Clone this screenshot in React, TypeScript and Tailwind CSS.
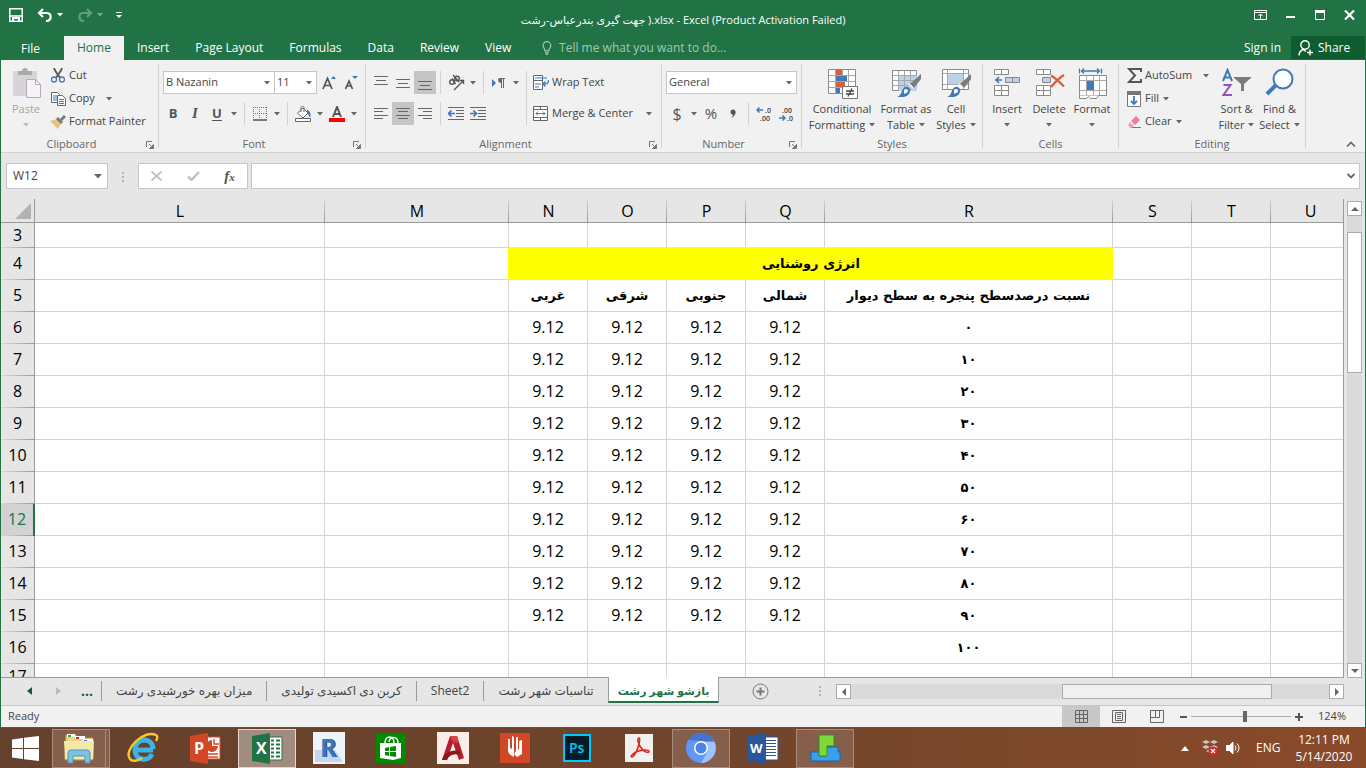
import { useState, type ReactNode } from 'react'

const columns = [
  { id: 'L', width: 'w-[290px]' },
  { id: 'M', width: 'w-[184px]' },
  { id: 'N', width: 'w-[79px]' },
  { id: 'O', width: 'w-[79px]' },
  { id: 'P', width: 'w-[79px]' },
  { id: 'Q', width: 'w-[79px]' },
  { id: 'R', width: 'w-[288px]' },
  { id: 'S', width: 'w-[79px]' },
  { id: 'T', width: 'w-[79px]' },
  { id: 'U', width: 'w-[79px]' },
]

const headings: Record<string, string> = {
  N: 'غربی',
  O: 'شرقی',
  P: 'جنوبی',
  Q: 'شمالی',
  R: 'نسبت درصدسطح پنجره به سطح دیوار',
}

const ratios = ['۰', '۱۰', '۲۰', '۳۰', '۴۰', '۵۰', '۶۰', '۷۰', '۸۰', '۹۰', '۱۰۰']
const rows = [3, 4, 5, 6, 7, 8, 9, 10, 11, 12, 13, 14, 15, 16, 17]

const sheets = ['میزان بهره خورشیدی رشت', 'کربن دی اکسیدی تولیدی', 'Sheet2', 'تناسبات شهر رشت', 'بازشو شهر رشت']
const tabs = ['Home', 'Insert', 'Page Layout', 'Formulas', 'Data', 'Review', 'View']

function Caret({ className = 'text-[#666]' }: { className?: string }) {
  return <svg width="6" height="4" viewBox="0 0 6 4" className={`shrink-0 ${className}`}><path d="M0 0h6L3 3.5z" fill="currentColor" /></svg>
}

function Sep() {
  return <span className="mx-1 w-px self-stretch bg-[#d2d2d2]" />
}

function Group({ name, width, launcher, children }: { name: string; width: string; launcher?: boolean; children: ReactNode }) {
  return (
    <section aria-label={name} className={`my-1 flex shrink-0 flex-col border-r border-[#d2d2d2] ${width}`}>
      <div className="flex min-h-0 flex-1 items-start">{children}</div>
      <div className={`relative h-3 text-center leading-4 text-[#666] ${launcher ? 'pr-4' : ''}`}>
        {name}
        {launcher && (
          <button aria-label={`${name} settings`} className="absolute right-1 top-[5px]">
            <svg width="8" height="8" viewBox="0 0 8 8" fill="none" stroke="#777"><path d="M.5 6V.5H6M3 3l3 3" /><path d="M7.5 3.5v4h-4z" fill="#777" /></svg>
          </button>
        )}
      </div>
    </section>
  )
}

function IconButton({ label, className = 'w-[22px]', active, children }: { label: string; className?: string; active?: boolean; children: ReactNode }) {
  return (
    <button aria-label={label} className={`flex h-[23px] shrink-0 items-center justify-center text-[#555] ${active ? 'bg-[#c5c5c5]' : 'hover:bg-[#ddd]'} ${className}`}>{children}</button>
  )
}

function BigButton({ icon, lines, width, caretBelow, disabled }: { icon: ReactNode; lines: string[]; width: string; caretBelow?: boolean; disabled?: boolean }) {
  return (
    <button disabled={disabled} className={`flex shrink-0 flex-col items-center pt-1 leading-4 ${disabled ? 'text-[#a6a6a6]' : 'text-[#444]'} ${width}`}>
      <span className="mb-[3px] flex h-[30px] items-center">{icon}</span>
      {lines.map((line, i) => (
        <span key={line} className="flex items-center gap-1 whitespace-nowrap">
          {line}
          {!caretBelow && i === lines.length - 1 && <Caret />}
        </span>
      ))}
      {caretBelow && <span className="flex h-4 items-center"><Caret className={disabled ? 'text-[#bbb]' : 'text-[#666]'} /></span>}
    </button>
  )
}

function SmallButton({ icon, label, caret }: { icon: ReactNode; label: string; caret?: string }) {
  return (
    <button className="flex h-[23px] items-center gap-[3px] whitespace-nowrap text-[#444]">
      <span className="flex w-4 justify-center">{icon}</span>
      {label}
      {caret && <span className={caret}><Caret /></span>}
    </button>
  )
}

function Picker({ label, options, width }: { label: string; options: string[]; width: string }) {
  return (
    <label className={`relative flex h-[23px] items-center border border-[#c6c6c6] bg-white ${width}`}>
      <select aria-label={label} className="h-full w-full appearance-none bg-transparent pl-[2px] text-[#444] outline-none">
        {options.map(o => <option key={o}>{o}</option>)}
      </select>
      <span className="pointer-events-none absolute right-1"><Caret /></span>
    </label>
  )
}

function Lines({ d }: { d: string }) {
  return <svg width="14" height="14" viewBox="0 0 14 14" stroke="#666" fill="none"><path d={d} /></svg>
}

const Grow = ({ down }: { down?: boolean }) => (
  <svg width="15" height="16" viewBox="0 0 15 16">
    <path d={down ? 'M1.5 14 5 6 8.500 14M3 11h4' : 'M1 14 5.500 3.500 10 14M3 10.500h5'} stroke="#555" strokeWidth="1.700" fill="none" />
    <path d={down ? 'M8 1h6l-3 3z' : 'M9 4h5l-2.500-3z'} fill="#3f7ab8" />
  </svg>
)

const Indent = ({ right }: { right?: boolean }) => (
  <svg width="16" height="14" viewBox="0 0 16 14" fill="none">
    <path d="M0 .5h16M8 3.500h8M8 6.500h8M8 9.500h8M0 12.500h16" stroke="#666" />
    <path d={right ? 'M0 6.500h6M3.500 3.500l3 3-3 3' : 'M7 6.500H1M3.500 3.500l-3 3 3 3'} stroke="#3f7ab8" strokeWidth="1.700" />
  </svg>
)

const Brush = () => (
  <g>
    <path d="M30 6v5l-7 9-4-4z" fill="#7c7c7c" />
    <path d="M18 16l4 4" stroke="#fff" strokeWidth="1.500" />
    <path d="M6 29c5-1 4-8 8-10 4-1 7 3 4 7-3 4-8 3-12 3z" fill="#3f7ab8" />
    <path d="M13 22c2-2 4-1 4 1s-3 2-4 3z" fill="#fff" />
  </g>
)

const FormatTable = () => (
  <svg width="31" height="30" viewBox="0 0 31 30">
    <path d="M1.500 2.500h24v20h-24z" fill="#fff" stroke="#8a8a8a" />
    <path d="M8 8h18v15H8z" fill="#bdd1e8" />
    <path d="M2 7.500h24M2 12.500h24M2 17.500h24M7.500 3v19M13.500 3v19M19.500 3v19" stroke="#a8a8a8" fill="none" />
    <Brush />
  </svg>
)

const CellStyles = () => (
  <svg width="31" height="30" viewBox="0 0 31 30">
    <path d="M1.500 1.500h26v20h-26z" fill="#fff" stroke="#8a8a8a" />
    <path d="M7 6h15v10H7z" fill="#bdd1e8" />
    <path d="M2 5.500h25M2 16.500h25M6.500 2v19M22.500 2v19" stroke="#a8a8a8" fill="none" />
    <Brush />
  </svg>
)

const Conditional = () => (
  <svg width="31" height="31" viewBox="0 0 31 31">
    <path d="M1.500 1.500h27v24h-27z" fill="#fff" stroke="#8a8a8a" />
    <path d="M2 7.500h26M2 13.500h26M2 19.500h26M8.500 2v23M15.500 2v23M21.500 2v23" stroke="#a8a8a8" />
    <path d="M9 2h6v5H9zM9 14h9v5H9z" fill="#d65f3d" /><path d="M9 8h11v5H9zM9 20h4v5H9z" fill="#3f7ab8" />
    <path d="M15.500 18.500h15v12h-15z" fill="#fff" stroke="#777" />
    <path d="M19 23h8M19 26h8M25 20.500l-4 8" stroke="#444" strokeWidth="1.300" />
  </svg>
)

const InsertCells = ({ del }: { del?: boolean }) => (
  <svg width="31" height="30" viewBox="0 0 31 30" fill="none">
    <path d="M2.500 1.500h14v5h-14zM9.500 1.500v5M2.500 17.500h14v10h-14zM9.500 17.500v10M2.500 22.500h14" fill="#fff" stroke="#8a8a8a" />
    {del ? (
      <g>
        <path d="M8.500 9.500h8v5h-8z" fill="#bdd1e8" stroke="#8a8a8a" />
        <path d="M17 7.500c4 2 8 6 13 11M30 7c-5 3-8 6-13 12" stroke="#d65f3d" strokeWidth="2.200" />
      </g>
    ) : (
      <g>
        <path d="M13.500 9.500h14v5h-14zM20.500 9.500v5" fill="#bdd1e8" stroke="#8a8a8a" />
        <path d="M10 12H4M7 9l-3 3 3 3" stroke="#3f7ab8" strokeWidth="1.700" />
      </g>
    )}
  </svg>
)

const FormatCells = () => (
  <svg width="29" height="31" viewBox="0 0 29 31" fill="none">
    <path d="M1.500.5v5M23.500.5v5M3 3h19M6 .5 3.500 3 6 5.500M19 .5 21.500 3 19 5.500" stroke="#3f7ab8" strokeWidth="1.300" />
    <path d="M1.500 7.500h27v20h-27z" fill="#fff" stroke="#8a8a8a" />
    <path d="M2 12.500h26M2 22.500h26M8.500 8v19M15.500 8v19M21.500 8v19" stroke="#a8a8a8" />
    <path d="M9 13h7v9H9z" fill="#3f7ab8" />
    <path d="M1.500 27.500v3h7l2-2 2 2h6l2-3" stroke="#8a8a8a" fill="#fff" />
  </svg>
)

const Decimal = ({ more }: { more?: boolean }) => (
  <svg width="16" height="20" viewBox="0 0 16 20" fontSize="7" fontWeight="600" fill="#444" fontFamily="Open Sans, sans-serif">
    <text x={more ? 9 : 4} y="9">{more ? '.0' : '.00'}</text>
    <text x={more ? 4 : 9} y="17">{more ? '.00' : '.0'}</text>
    <path d={more ? 'M7 6H1M3.500 3.500 1 6l2.500 2.500' : 'M1 14h6M4.500 11.500 7 14l-2.500 2.500'} stroke="#3f7ab8" strokeWidth="1.500" fill="none" />
  </svg>
)

function Ribbon() {
  return (
    <div className="flex h-[93px] shrink-0 border-b border-[#d2d2d2] bg-[#f1f1f1] text-[11px]">
      <Group name="Clipboard" width="w-[158px]" launcher>
        <BigButton disabled caretBelow width="ml-1 w-[42px]" lines={['Paste']} icon={
          <svg width="29" height="30" viewBox="0 0 29 30">
            <path d="M1 3h24v25H1z" fill="#d9d3d9" /><path d="M6 3h4c0-4 6-4 6 0h4v4H6z" fill="#aaa" />
            <path d="M14.500 11.500h9l5 5v13h-14z" fill="#f6f2f8" stroke="#b3adb3" /><path d="M23.500 11.500v5h5" fill="none" stroke="#b3adb3" />
          </svg>
        } />
        <div className="ml-[3px] flex flex-col">
          <SmallButton label="Cut" icon={
            <svg width="14" height="15" viewBox="0 0 14 15" fill="none"><path d="M3 0c1 4 4 6 6 10M11 0C10 4 7 6 5 10" stroke="#555" strokeWidth="1.800" /><circle cx="3" cy="11.500" r="2.500" stroke="#3f7ab8" strokeWidth="1.300" /><circle cx="11" cy="11.500" r="2.500" stroke="#3f7ab8" strokeWidth="1.300" /></svg>
          } />
          <SmallButton label="Copy" caret="ml-2" icon={
            <svg width="15" height="14" viewBox="0 0 15 14" fill="#fff" stroke="#666"><path d="M.5.5h6l2 2v8h-8z" /><path d="M2 4h4M2 6h4M2 8h4" stroke="#3f7ab8" /><path d="M6.500 3.500h5l3 3v7h-8z" /><path d="M8 7.500h5M8 9.500h5M8 11.500h5" stroke="#3f7ab8" /></svg>
          } />
          <SmallButton label="Format Painter" icon={
            <svg width="16" height="14" viewBox="0 0 16 14"><path d="M0 6l7-2 4 5-3 5z" fill="#e9c27d" /><path d="M6 4l2-2 5 5-2 2z" fill="#777" /><path d="M10 4l4-4 2 2-4 4z" fill="#777" /></svg>
          } />
        </div>
      </Group>

      <Group name="Font" width="w-[207px]" launcher>
        <div className="flex flex-col gap-2 pt-[7px]">
          <div className="flex">
            <Picker label="Font name" width="ml-1 w-[112px]" options={['B Nazanin', 'Calibri', 'Tahoma']} />
            <Picker label="Font size" width="-ml-px mr-px w-[43px]" options={['11', '12', '14']} />
            <IconButton label="Increase font size"><Grow /></IconButton>
            <IconButton label="Decrease font size"><Grow down /></IconButton>
          </div>
          <div className="flex pl-[3px]">
            <IconButton label="Bold"><b className="text-[13px]">B</b></IconButton>
            <IconButton label="Italic"><i className="font-['Liberation_Serif',serif] text-[15px] font-bold">I</i></IconButton>
            <IconButton label="Underline"><b className="text-[13px] underline underline-offset-2">U</b></IconButton>
            <IconButton label="Underline options" className="w-3"><Caret /></IconButton>
            <Sep />
            <IconButton label="Borders">
              <svg width="14" height="14" viewBox="0 0 14 14" stroke="#777" fill="none"><path d="M0 .5h14M.5 0v12M13.500 0v12M6.500 0v12M0 6.500h14" strokeDasharray="1 1" /><path d="M0 13h14" stroke="#555" strokeWidth="1.500" /></svg>
            </IconButton>
            <IconButton label="Border styles" className="mr-1 w-3"><Caret /></IconButton>
            <span className="w-px bg-[#d2d2d2]" />
            <IconButton label="Fill color" className="ml-1 w-[22px]">
              <svg width="17" height="16" viewBox="0 0 17 16" fill="#fff" stroke="#666"><path d="M2.500 7 8 2l5 5-5 5z" /><path d="M6 6V1.500c0-1.500 3-1.500 3 0V6" fill="none" /><path d="M12 4c4 1 4 5 3 8-1-2-1-3-3-5z" fill="#3f7ab8" stroke="none" /><path d="M.5 12.500h15v3H.5z" /></svg>
            </IconButton>
            <IconButton label="Fill colors" className="w-3"><Caret /></IconButton>
            <IconButton label="Font color">
              <svg width="16" height="16" viewBox="0 0 16 16"><path d="M4 11 8 1l4 10M5.500 8h5" stroke="#555" strokeWidth="2" fill="none" /><path d="M0 12h16v4H0z" fill="red" /></svg>
            </IconButton>
            <IconButton label="Font colors" className="w-3"><Caret /></IconButton>
          </div>
        </div>
      </Group>

      <Group name="Alignment" width="w-[296px]" launcher>
        <div className="flex pt-[7px]">
          <div className="flex flex-col gap-2 pl-1">
            <div className="flex">
              <IconButton label="Top align"><Lines d="M0 .5h14M2 4.500h10M0 8.500h14" /></IconButton>
              <IconButton label="Middle align"><Lines d="M0 3.500h14M2 7.500h10M0 11.500h14" /></IconButton>
              <IconButton label="Bottom align" active><Lines d="M0 5.500h14M2 9.500h10M0 13.500h14" /></IconButton>
              <Sep />
              <IconButton label="Orientation">
                <svg width="17" height="17" viewBox="0 0 17 17" fill="none" stroke="#555" strokeWidth="1.400"><circle cx="4" cy="8" r="2.300" /><path d="M4 4.500 7.500 10M5 1l6 7" /><circle cx="9" cy="4.500" r="2.300" /><path d="M6 16 15 7M11.500 6.500h4V10" /></svg>
              </IconButton>
              <IconButton label="Orientation options" className="w-3"><Caret /></IconButton>
              <Sep />
              <IconButton label="Text direction">
                <svg width="14" height="12" viewBox="0 0 14 12"><path d="M0 2v8l4-4z" fill="#3f7ab8" /><path d="M8 1h5v1h-1v9h-1V2h-1v9H9V6C6 6 5 1 8 1z" fill="#666" /></svg>
              </IconButton>
              <IconButton label="Text direction options" className="w-3"><Caret /></IconButton>
            </div>
            <div className="flex">
              <IconButton label="Align left"><Lines d="M0 1.500h14M0 4.500h9M0 8.500h14M0 11.500h9" /></IconButton>
              <IconButton label="Center" active><Lines d="M0 1.500h14M2 4.500h10M0 8.500h14M2 11.500h10" /></IconButton>
              <IconButton label="Align right"><Lines d="M0 1.500h14M5 4.500h9M0 8.500h14M5 11.500h9" /></IconButton>
              <Sep />
              <IconButton label="Decrease indent"><Indent /></IconButton>
              <IconButton label="Increase indent"><Indent right /></IconButton>
            </div>
          </div>
          <Sep />
          <div className="flex flex-col gap-2 pl-[2px]">
            <SmallButton label="Wrap Text" icon={
              <svg width="16" height="15" viewBox="0 0 16 15" fill="#fff" stroke="#666"><path d="M.5.5h9v5h-9zM.5 5.500h9v9h-9z" /><path d="M2 3h12" stroke="#3f7ab8" /><path d="M2 9h6M2 12h4" stroke="#3f7ab8" /><path d="M15.500 5c0 4-2 4-5 4M12.500 6.500 10 9l2.500 2.500" stroke="#3f7ab8" strokeWidth="1.300" fill="none" /></svg>
            } />
            <SmallButton label="Merge & Center" caret="ml-2.5" icon={
              <svg width="16" height="15" viewBox="0 0 16 15" fill="#fff" stroke="#666"><path d="M.5.5h14v14H.5zM.5 3.500h14M.5 11.500h14M7.500.5v3M7.500 11.500v3" /><path d="M3 7.500h9M5 5.500l-2 2 2 2M10 5.500l2 2-2 2" stroke="#3f7ab8" fill="none" /></svg>
            } />
          </div>
        </div>
      </Group>

      <Group name="Number" width="w-[140px]" launcher>
        <div className="flex flex-col gap-2 pl-1 pt-[7px]">
          <Picker label="Number format" width="w-[131px]" options={['General', 'Number', 'Currency']} />
          <div className="flex">
            <IconButton label="Currency"><span className="text-[16px]">$</span></IconButton>
            <IconButton label="Currency options" className="w-3"><Caret /></IconButton>
            <IconButton label="Percent"><span className="text-[15px]">%</span></IconButton>
            <IconButton label="Comma style"><svg width="6" height="9" viewBox="0 0 6 9"><circle cx="3" cy="3" r="2.500" fill="#555" /><path d="M5.500 3c0 3-2 5-4 6 1-2 2-3 1-5z" fill="#555" /></svg></IconButton>
            <Sep />
            <IconButton label="Increase decimal"><Decimal more /></IconButton>
            <IconButton label="Decrease decimal"><Decimal /></IconButton>
          </div>
        </div>
      </Group>

      <Group name="Styles" width="w-[181px]">
        <BigButton width="ml-1 w-[72px]" lines={['Conditional', 'Formatting']} icon={<Conditional />} />
        <BigButton width="w-[56px]" lines={['Format as', 'Table']} icon={<FormatTable />} />
        <BigButton width="w-[44px]" lines={['Cell', 'Styles']} icon={<CellStyles />} />
      </Group>

      <Group name="Cells" width="w-[136px]">
        <BigButton caretBelow width="ml-[3px] w-[42px]" lines={['Insert']} icon={<InsertCells />} />
        <BigButton caretBelow width="w-[42px]" lines={['Delete']} icon={<InsertCells del />} />
        <BigButton caretBelow width="w-[44px]" lines={['Format']} icon={<FormatCells />} />
      </Group>

      <Group name="Editing" width="w-[187px]">
        <div className="ml-[7px] flex w-[89px] flex-col items-start">
          <SmallButton label="AutoSum" caret="ml-2" icon={
            <svg width="15" height="15" viewBox="0 0 15 15" fill="none" stroke="#555" strokeWidth="2"><path d="M14 4V1H2l6 6.500L2 14h12v-3" /></svg>
          } />
          <SmallButton label="Fill" caret="pl-px" icon={
            <svg width="14" height="16" viewBox="0 0 14 16" fill="#fff" stroke="#777"><path d="M.5.5h13v15H.5z" /><path d="M0 0h14v4H0z" fill="#777" stroke="none" /><path d="M7 5v8M4 10l3 3 3-3" stroke="#3f7ab8" strokeWidth="1.800" fill="none" /></svg>
          } />
          <SmallButton label="Clear" caret="pl-px" icon={
            <svg width="15" height="14" viewBox="0 0 15 14"><path d="M4 6 9 1l4 4-5 5z" fill="#e87f95" /><path d="M3 7l4 4-2 2H3l-2-3z" fill="#f0a5b5" /><path d="M5 12.500h9" stroke="#777" /></svg>
          } />
        </div>
        <BigButton width="w-[43px]" lines={['Sort &', 'Filter']} icon={
          <svg width="31" height="30" viewBox="0 0 31 30" fill="none"><path d="M2 13 6.500 2 11 13M3.500 9.500h6" stroke="#3f7ab8" strokeWidth="2" /><path d="M2.500 17h7l-7 10H11" stroke="#9352b8" strokeWidth="2" /><path d="M13 9h17v1l-7 6v7h-3v-7l-7-6z" fill="#7c7c7c" /></svg>
        } />
        <BigButton width="w-[43px]" lines={['Find &', 'Select']} icon={
          <svg width="29" height="30" viewBox="0 0 29 30" fill="#fff" stroke="#3f7ab8"><path d="M2 26 11 17" strokeWidth="4" /><circle cx="18" cy="11" r="9.500" strokeWidth="2" /></svg>
        } />
      </Group>
      <div className="flex flex-1 items-end justify-end p-1">
        <button aria-label="Collapse ribbon" className="mr-[5px]"><svg width="10" height="7" viewBox="0 0 10 7" fill="none" stroke="#666" strokeWidth="1.700"><path d="M1 5.500 5 1.500l4 4" /></svg></button>
      </div>
    </div>
  )
}

function Grid() {
  const cell = (row: number, col: string) => {
    if (row === 5) return headings[col]
    if (col === 'R' && row > 5) return ratios[row - 6]
    if ('NOPQ'.includes(col) && row > 5 && row < 16) return '9.12'
    return ''
  }

  return (
    <div className="min-w-0 flex-1 overflow-hidden border-b border-r border-[#9b9b9b]">
      <table className="w-[1349px] table-fixed border-separate border-spacing-0 text-[16px] leading-5 text-black">
        <thead>
          <tr className="h-6">
            <th className="w-[34px] border-b border-r border-[#9b9b9b] bg-[#e6e6e6] p-0">
              <svg className="ml-[14px]" width="16" height="16" viewBox="0 0 16 16"><path d="M16 0v16H0z" fill="#b2b2b2" /></svg>
            </th>
            {columns.map(c => (
              <th key={c.id} scope="col" className={`border-b border-[#9b9b9b] bg-[#e6e6e6] bg-linear-to-b from-[#d4d4d4] to-[#9b9b9b] bg-[length:1px_100%] bg-right bg-no-repeat p-0 font-normal ${c.width}`}>{c.id}</th>
            ))}
          </tr>
        </thead>
        <tbody>
          {rows.map(row => (
            <tr key={row} className={row === 3 || row === 17 ? 'h-[25px]' : 'h-8'}>
              <th scope="row" className={`bg-linear-to-r from-[#d8d8d8] to-[#9b9b9b] bg-[length:100%_1px] bg-bottom bg-no-repeat p-0 pb-0.5 font-normal ${
                row === 12 ? 'border-r-2 border-[#217346] bg-[#d2d2d2] text-[#217346]' : 'border-r border-[#9b9b9b] bg-[#e6e6e6]'
              }`}>{row}</th>
              {columns.map(c => {
                if (row === 4 && 'OPQR'.includes(c.id)) return null
                if (row === 4 && c.id === 'N') return (
                  <td key={c.id} colSpan={5} dir="rtl" className="bg-[#ff0] p-0 text-center font-['DejaVu_Sans',sans-serif] text-[13px] font-bold">انرژی روشنایی</td>
                )
                return (
                  <td key={c.id} className={`overflow-hidden whitespace-nowrap border-b border-r bg-white p-0 text-center ${
                    row === 3 && 'NOPQR'.includes(c.id) ? 'border-r-[#d4d4d4] border-b-[#ff0]'
                      : row === 4 && c.id === 'M' ? 'border-r-[#ff0] border-b-[#d4d4d4]' : 'border-[#d4d4d4]'
                  } ${row === 5 || c.id === 'R' ? "font-['DejaVu_Sans',sans-serif] text-[13px] font-bold" : 'pb-0.5'}`}>{cell(row, c.id)}</td>
                )
              })}
            </tr>
          ))}
        </tbody>
      </table>
    </div>
  )
}

function ScrollArrow({ label, d }: { label: string; d: string }) {
  return (
    <button aria-label={label} className="flex size-[15px] shrink-0 items-center justify-center border border-[#ababab] bg-white">
      <svg width="8" height="8" viewBox="0 0 8 8"><path d={d} fill="#666" /></svg>
    </button>
  )
}

function TaskItem({ label, open, current, stacked, children }: { label: string; open?: boolean; current?: boolean; stacked?: boolean; children: ReactNode }) {
  return (
    <button aria-label={label} className={`flex h-[39px] w-[58px] shrink-0 items-center border ${
      current ? 'border-[#e3d8d0] bg-[#a08c80]' : open ? 'border-[#a78d7f] bg-[#855f4c]' : 'border-transparent'
    }`}>
      <span className={`flex h-full flex-1 items-center justify-center ${stacked ? 'border-r border-[#a78d7f]' : ''}`}>{children}</span>
      {stacked && <span className="w-[3px]" />}
    </button>
  )
}

function Taskbar() {
  return (
    <footer className="flex h-10 shrink-0 items-center bg-linear-to-r from-[#65402c] via-[#6f452b] to-[#8a4a2a] text-white">
      <button aria-label="Start" className="flex w-[50px] justify-center">
        <svg width="27" height="25" viewBox="0 0 27 25" fill="#fff"><path d="M0 3.500 11 2v10H0zM12 1.800 27 0v12H12zM0 13h11v10L0 21.500zM12 13h15v12l-15-1.800z" /></svg>
      </button>
      <div className="flex flex-1 gap-1 pl-0.5">
        <TaskItem label="File Explorer" open stacked>
          <svg width="33" height="32" viewBox="0 0 33 32"><path d="M3 3h10l2 3h15v22H2z" fill="#e9d487" stroke="#b99a45" /><path d="M4 2h8v3H4z" fill="#fff" /><path d="M5 3h3v2H5z" fill="#2cae2c" /><path d="M12 4h10v3H12z" fill="#fff" /><path d="M13 5h3v2h-3z" fill="#cc2c22" /><path d="M20 7h10v3H20z" fill="#fff" /><path d="M21 8h3v2h-3z" fill="#2a7fd4" /><path d="M1 9h30l-1 18H2z" fill="#f5e9a9" /><path d="M5 31V21q0-3 3-3h16q3 0 3 3v10h-5v-7H10v7z" fill="#7cc2e3" stroke="#4b93bb" /></svg>
        </TaskItem>
        <TaskItem label="Internet Explorer">
          <svg width="32" height="32" viewBox="0 0 32 32" fill="none"><path d="M26 18H10M26 17c0-12-17-12-18 0-1 11 13 14 17 5" stroke="#35b5ea" strokeWidth="5" /><path d="M3 27C-4 18 17-3 29 3c2 1 1 4 0 6M3 27c2 3 8 2 12-1" stroke="#f6c72c" strokeWidth="2.500" /></svg>
        </TaskItem>
        <TaskItem label="PowerPoint">
          <svg width="31" height="31" viewBox="0 0 31 31"><path d="M16 4h14v22H16z" fill="#fff" stroke="#d24726" /><path d="M22 7v6h6a6 6 0 1 1-6-6z" fill="#d24726" /><path d="M24 6v5h5" fill="none" stroke="#d24726" strokeWidth="1.500" /><path d="M18 21h10M18 24h10" stroke="#d24726" strokeWidth="1.500" /><path d="M0 3 18 0v31L0 28z" fill="#d24726" /><text x="4" y="21" fontSize="16" fontWeight="700" fill="#fff">P</text></svg>
        </TaskItem>
        <TaskItem label="Excel" current>
          <svg width="31" height="31" viewBox="0 0 31 31"><path d="M16 4h14v23H16z" fill="#fff" stroke="#217346" /><path d="M19 7.500h3M19 11.500h3M19 15.500h3M19 19.500h3M19 23.500h3M24 7.500h4M24 11.500h4M24 15.500h4M24 19.500h4M24 23.500h4" stroke="#217346" strokeWidth="2" /><path d="M0 3 18 0v31L0 28z" fill="#217346" /><text x="4" y="21" fontSize="16" fontWeight="700" fill="#fff">X</text></svg>
        </TaskItem>
        <TaskItem label="Revit">
          <svg width="32" height="32" viewBox="0 0 32 32"><path d="M0 0h32v32H0z" fill="#eef3fa" /><path d="M2 18h20l8 12H2z" fill="#c3d6ee" /><text x="8" y="25" fontSize="25" fontWeight="700" fill="#1d4a80">R</text><text x="7" y="25" fontSize="25" fontWeight="700" fill="#3878bd">R</text></svg>
        </TaskItem>
        <TaskItem label="Store">
          <svg width="30" height="30" viewBox="0 0 30 30"><path d="M0 0h30v30H0z" fill="#008a00" /><path d="M9 10c0-8 9-8 9 0M13 9c1-6 9-6 9 1" fill="none" stroke="#fff" strokeWidth="1.500" /><path d="M4 10h21v15l-8 2-13-2z" fill="#fff" /><path d="M9 15l4-1v4H9zM14 14l6-1v5h-6zM9 19h4v4l-4-1zM14 19h6v5l-6-1z" fill="#008a00" /></svg>
        </TaskItem>
        <TaskItem label="AutoCAD">
          <svg width="32" height="32" viewBox="0 0 32 32"><path d="M0 0h32v32H0z" fill="#fbeeea" /><path d="M5 28 13 4h7l7 22-5 2-6-17-6 17z" fill="#b41f2b" /><path d="M5 28c2-7 10-11 17-9l1 4c-6-2-11 0-13 5z" fill="#8c1620" /><path d="M13 4h7l2 7-6-1z" fill="#d8434a" /></svg>
        </TaskItem>
        <TaskItem label="Reader">
          <svg width="30" height="30" viewBox="0 0 30 30"><path d="M0 0h30v30H0z" fill="#d24726" /><path d="M8 6v11c0 3 2 5 6 7V4l-2-1v13l-2-1V6z" fill="#fff" /><path d="M16 4v14l-2 3 3 3 5-3V7l-3 1v9l-1-1V4z" fill="#fff" /></svg>
        </TaskItem>
        <TaskItem label="Photoshop">
          <svg width="28" height="28" viewBox="0 0 28 28"><path d="M1 1h26v26H1z" fill="#001d26" stroke="#00c8ff" strokeWidth="2" /><text x="6" y="19" fontSize="14" fontWeight="600" fill="#00c8ff">Ps</text></svg>
        </TaskItem>
        <TaskItem label="Acrobat Reader">
          <svg width="28" height="28" viewBox="0 0 28 28" fill="none"><path d="M0 0h28v28H0z" fill="#f2f0ee" /><path d="M14 4c-3 1 0 7 3 11s8 4 7 2-9-1-13 1-6 5-4 5 6-8 7-13 1-6 0-6z" stroke="#e2231a" strokeWidth="1.500" /></svg>
        </TaskItem>
        <TaskItem label="Chromium" open>
          <svg width="30" height="30" viewBox="0 0 30 30"><circle cx="15" cy="15" r="15" fill="#5e97f6" /><path d="M2 7a15 15 0 0 1 26 1H15z" fill="#4474cf" /><path d="M28.500 9H15l7 9-7 12A15 15 0 0 0 28.500 9z" fill="#a1c2fa" /><circle cx="15" cy="15" r="7" fill="#fff" /><circle cx="15" cy="15" r="5.500" fill="#4d82e6" /></svg>
        </TaskItem>
        <TaskItem label="Word">
          <svg width="31" height="31" viewBox="0 0 31 31"><path d="M16 4h14v23H16z" fill="#fff" stroke="#2b579a" /><path d="M18 7.500h10M18 10.500h10M18 13.500h10M18 16.500h10M18 19.500h10M18 22.500h10" stroke="#2b579a" /><path d="M0 3 18 0v31L0 28z" fill="#2b579a" /><text x="2" y="20" fontSize="13" fontWeight="700" fill="#fff">W</text></svg>
        </TaskItem>
        <TaskItem label="Blocks" open>
          <svg width="31" height="28" viewBox="0 0 31 28"><path d="M1 18h8v4h7v-9h12v5h2v9H1z" fill="#38a0ec" stroke="#1764a8" /><path d="M9 1h15v11h-7v10H9z" fill="#7fd83c" stroke="#3e8c14" /></svg>
        </TaskItem>
      </div>
      <div className="flex items-center text-[12px]">
        <svg width="8" height="5" viewBox="0 0 8 5"><path d="M0 5h8L4 0z" fill="#fff" /></svg>
        <svg className="ml-[13px]" width="16" height="16" viewBox="0 0 16 16"><path d="M4 0l4 2-4 2-4-2zM12 0l4 2-4 2-4-2zM4 5l4 2-4 2-4-2zM12 5l4 2-4 2-4-2zM4 11l4-2 4 2-4 2z" fill="#c9c2bd" /><circle cx="11" cy="11" r="4.500" fill="#e0232e" /><path d="M9 9l4 4M13 9l-4 4" stroke="#fff" strokeWidth="1.300" /></svg>
        <svg className="ml-2" width="15" height="14" viewBox="0 0 15 14" fill="none" stroke="#fff"><path d="M.5 4.500h3L7 1v12L3.500 9.500h-3z" fill="#fff" /><path d="M9 4.500q2 2.500 0 5M11 2.500q4 4.500 0 9" /></svg>
        <span className="ml-[15px] w-6">ENG</span>
        <div className="ml-3.5 mr-3 w-[60px] text-center leading-[17px]">
          <div className="whitespace-nowrap">12:11 PM</div>
          <div className="whitespace-nowrap">5/14/2020</div>
        </div>
      </div>
    </footer>
  )
}

export default function App() {
  const [tab, setTab] = useState('Home')
  const [sheet, setSheet] = useState(sheets[4])

  return (
    <div className="flex h-screen flex-col overflow-hidden bg-[#e6e6e6] font-['Open_Sans','DejaVu_Sans',sans-serif] text-[12px]">
      <div className="flex min-h-0 flex-1 flex-col border-x border-b border-[#217346]">
        <header className="relative flex h-9 shrink-0 items-center justify-between bg-[#217346] pr-2.5 text-white">
          <div className="flex items-center pb-1.5 pl-2">
            <button aria-label="Save"><svg width="14" height="14" viewBox="0 0 14 14" fill="none" stroke="#fff" strokeWidth="1.500"><path d="M.8.8h12.400v12.400H.8z" /><path d="M1 8h12" /><path d="M4 13v-3h6v3" strokeWidth="2" /></svg></button>
            <button aria-label="Undo" className="ml-[14px]"><svg width="16" height="14" viewBox="0 0 16 14" fill="none" stroke="#fff" strokeWidth="2.200"><path d="M6 1 2 5l4 4M2 5h8c5 0 5 8-1 8" /></svg></button>
            <span className="ml-1"><Caret className="text-white" /></span>
            <button aria-label="Redo" className="ml-3.5 opacity-30"><svg width="16" height="14" viewBox="0 0 16 14" fill="none" stroke="#fff" strokeWidth="2.200"><path d="M10 1l4 4-4 4M14 5H6c-5 0-5 8 1 8" /></svg></button>
            <span className="ml-1 opacity-40"><Caret className="text-white" /></span>
            <button aria-label="Customize" className="ml-[13px]"><svg width="6" height="7" viewBox="0 0 6 7" fill="#fff"><path d="M0 0h6v1H0zM0 3h6L3 6z" /></svg></button>
          </div>
          <h1 className="absolute inset-x-0 top-3 text-center text-[11px] leading-4" dir="ltr">جهت گیری بندرعباس-رشت ).xlsx - Excel (Product Activation Failed)</h1>
          <div className="z-10 flex items-center gap-[18px] pb-1.5">
            <button aria-label="Ribbon display options"><svg width="13" height="10" viewBox="0 0 13 10" fill="none" stroke="#fff"><path d="M.5.5h12v9H.5zM.5 2.500h12M6.500 9V4M4.500 6l2-2 2 2" /></svg></button>
            <button aria-label="Minimize"><svg width="11" height="10" viewBox="0 0 11 10"><path d="M1 6h9v2H1z" fill="#fff" /></svg></button>
            <button aria-label="Maximize"><svg width="12" height="10" viewBox="0 0 12 10"><path d="M1.500 1h9v8.500h-9z" fill="none" stroke="#fff" /><path d="M1 0h10v3H1z" fill="#fff" /></svg></button>
            <button aria-label="Close"><svg width="11" height="10" viewBox="0 0 11 10" stroke="#fff" strokeWidth="2.200"><path d="M1 .5l9 9M10 .5l-9 9" /></svg></button>
          </div>
        </header>

        <nav className="flex h-6 shrink-0 items-center bg-[#217346] text-[12px] text-white">
          <button className="w-[63px] pr-1 pt-px">File</button>
          {tabs.map(t => (
            <button key={t} onClick={() => setTab(t)} className={`h-6 whitespace-nowrap px-[13px] ${tab === t ? 'bg-[#f1f1f1] text-[#217346]' : ''}`}>{t}</button>
          ))}
          <label className="ml-[18px] flex flex-1 items-center gap-[7px]">
            <svg width="10" height="14" viewBox="0 0 10 14" fill="none" stroke="#a3c7b2" strokeWidth="1.200"><path d="M3 10C3 7 1 7 1 4.500a4 4 0 0 1 8 0C9 7 7 7 7 10zM3 12h4M4 13.500h2" /></svg>
            <input aria-label="Tell me" placeholder="Tell me what you want to do..." className="w-full bg-transparent outline-none placeholder:text-[#a3c7b2]" />
          </label>
          <button className="mr-[10px]">Sign in</button>
          <button className="flex h-[23px] w-[74px] items-center gap-1 self-start bg-[#0e5c2f] pl-[7px]">
            <svg width="16" height="16" viewBox="0 0 16 16" fill="none" stroke="#fff" strokeWidth="1.400"><circle cx="7" cy="5" r="4.200" /><path d="M1 15.500c0-3 2-5 4-6l3 2M9 12.500h6M12 9.500v6" /></svg>
            Share
          </button>
        </nav>

        <Ribbon />

        <div className="flex h-[46px] shrink-0 items-start pb-2 pl-[5px] pr-[5px] pt-[10px]">
          <div className="flex h-[26px] w-[102px] items-center border border-[#c6c6c6] bg-white pr-[5px]">
            <input aria-label="Name box" defaultValue="W12" className="w-0 flex-1 bg-transparent pl-1.5 text-[#444] outline-none" />
            <button aria-label="Names"><svg width="8" height="5" viewBox="0 0 8 5"><path d="M0 0h8L4 4.500z" fill="#666" /></svg></button>
          </div>
          <svg className="ml-[14px] mr-[14px] self-center" width="2" height="10" viewBox="0 0 2 10"><path d="M0 0h2v2H0zM0 4h2v2H0zM0 8h2v2H0z" fill="#b5b5b5" /></svg>
          <div className="flex h-[26px] w-[110px] items-center justify-around border border-[#c6c6c6] bg-white">
            <button aria-label="Cancel"><svg width="11" height="10" viewBox="0 0 11 10" stroke="#bbb" strokeWidth="1.600"><path d="M.5.5l10 9M10.500.5l-10 9" /></svg></button>
            <button aria-label="Enter"><svg width="13" height="10" viewBox="0 0 13 10" fill="none" stroke="#bbb" strokeWidth="2.200"><path d="M1 5.500 4.500 9 12 1" /></svg></button>
            <button aria-label="Insert function" className="font-['Liberation_Serif',serif] text-[15px] font-bold italic leading-5 text-[#555]">f<span className="text-[11px]">x</span></button>
          </div>
          <div className="ml-[3px] flex h-[26px] flex-1 items-center border border-[#c6c6c6] bg-white pr-1">
            <input aria-label="Formula" className="h-full w-full bg-transparent px-1 outline-none" />
            <button aria-label="Expand formula bar"><svg width="8" height="6" viewBox="0 0 8 6" fill="none" stroke="#666" strokeWidth="1.800"><path d="M.5 1 4 4.500 7.500 1" /></svg></button>
          </div>
        </div>

        <main className="flex min-h-0 flex-1">
          <Grid />
          <div className="flex w-[21px] flex-col pl-[3px] pt-[2px]">
            <ScrollArrow label="Scroll up" d="M0 6h8L4 2z" />
            <div className="w-[15px] flex-1 bg-[#dadada] pt-4"><div className="h-[141px] border border-[#ababab] bg-white" /></div>
            <ScrollArrow label="Scroll down" d="M0 2h8L4 6z" />
          </div>
        </main>

        <div className="flex h-7 shrink-0 items-start border-b border-[#c6c6c6] text-[#444]">
          <div className="flex h-[26px] w-[100px] items-center pl-[26px]">
            <button aria-label="Previous sheet"><svg width="5" height="8" viewBox="0 0 5 8"><path d="M5 0v8L0 4z" fill="#0e5c2f" /></svg></button>
            <button aria-label="Next sheet" disabled className="ml-6"><svg width="5" height="8" viewBox="0 0 5 8"><path d="M0 0v8l5-4z" fill="#bbb" /></svg></button>
            <button aria-label="More sheets" className="ml-5 text-[14px] font-bold leading-4 text-[#0e5c2f]">...</button>
          </div>
          {sheets.map((s, i) => (
            <button key={s} onClick={() => setSheet(s)} className={sheet === s
              ? '-mt-px h-[26px] border-x border-b-2 border-x-[#9b9b9b] border-b-[#217346] bg-white px-[9px] pt-1 text-[11px] font-bold text-[#217346]'
              : `my-[3px] h-5 px-[14px] ${i < 4 ? 'border-l border-[#9b9b9b]' : ''}`}>{s}</button>
          ))}
          <button aria-label="New sheet" className="ml-[33px] mt-[5px]"><svg width="17" height="17" viewBox="0 0 17 17" fill="none" stroke="#777"><circle cx="8.500" cy="8.500" r="7.500" /><path d="M4.500 8.500h8M8.500 4.500v8" strokeWidth="2" /></svg></button>
          <span className="flex-1" />
          <svg className="mr-[15px] mt-2" width="2" height="10" viewBox="0 0 2 10"><path d="M0 0h2v2H0zM0 4h2v2H0zM0 8h2v2H0z" fill="#b5b5b5" /></svg>
          <div className="mr-[21px] mt-[6px] flex w-[38%] max-w-[508px] bg-[#dadada]">
            <ScrollArrow label="Scroll left" d="M6 0v8L2 4z" />
            <div className="flex flex-1 justify-end pr-[57px]"><div className="w-[210px] border border-[#ababab] bg-[#f0f0f0]" /></div>
            <ScrollArrow label="Scroll right" d="M2 0v8l4-4z" />
          </div>
        </div>

        <div className="flex h-[21px] shrink-0 items-center bg-[#f1f1f1] text-[11px] text-[#444]">
          <span className="flex-1 pl-[7px]">Ready</span>
          <button aria-label="Normal view" className="flex h-full w-[38px] items-center justify-center bg-[#c8c8c8]"><svg width="13" height="13" viewBox="0 0 13 13" fill="none" stroke="#666"><path d="M.5.5h12v12H.5zM.5 4.500h12M.5 8.500h12M4.500.5v12M8.500.5v12" /></svg></button>
          <button aria-label="Page layout view" className="flex h-full w-[38px] items-center justify-center"><svg width="14" height="13" viewBox="0 0 14 13" fill="none" stroke="#666"><path d="M.5.5h13v12H.5zM3.500 2.500h7v8h-7zM5 4.500h4M5 6.500h4M5 8.500h4" /></svg></button>
          <button aria-label="Page break view" className="flex h-full w-[38px] items-center justify-center"><svg width="14" height="13" viewBox="0 0 14 13" fill="none" stroke="#666"><path d="M.5.5h13v12H.5zM5.500.5v7h-5M9.500.5v7h-4" /></svg></button>
          <button aria-label="Zoom out" className="ml-1 mr-1"><svg width="7" height="8" viewBox="0 0 7 8"><path d="M0 3h7v2H0z" fill="#555" /></svg></button>
          <input type="range" aria-label="Zoom" min="0" max="100" defaultValue="54" className="h-[11px] w-[100px] appearance-none bg-linear-to-r from-[#ababab] to-[#ababab] bg-[length:100%_1px] bg-center bg-no-repeat [&::-webkit-slider-thumb]:h-[11px] [&::-webkit-slider-thumb]:w-1 [&::-webkit-slider-thumb]:appearance-none [&::-webkit-slider-thumb]:bg-[#666]" />
          <button aria-label="Zoom in" className="ml-1"><svg width="8" height="8" viewBox="0 0 8 8"><path d="M0 3h8v2H0zM3 0h2v8H3z" fill="#555" /></svg></button>
          <span className="ml-[15px] mr-[19px]">124%</span>
        </div>
      </div>
      <Taskbar />
    </div>
  )
}
